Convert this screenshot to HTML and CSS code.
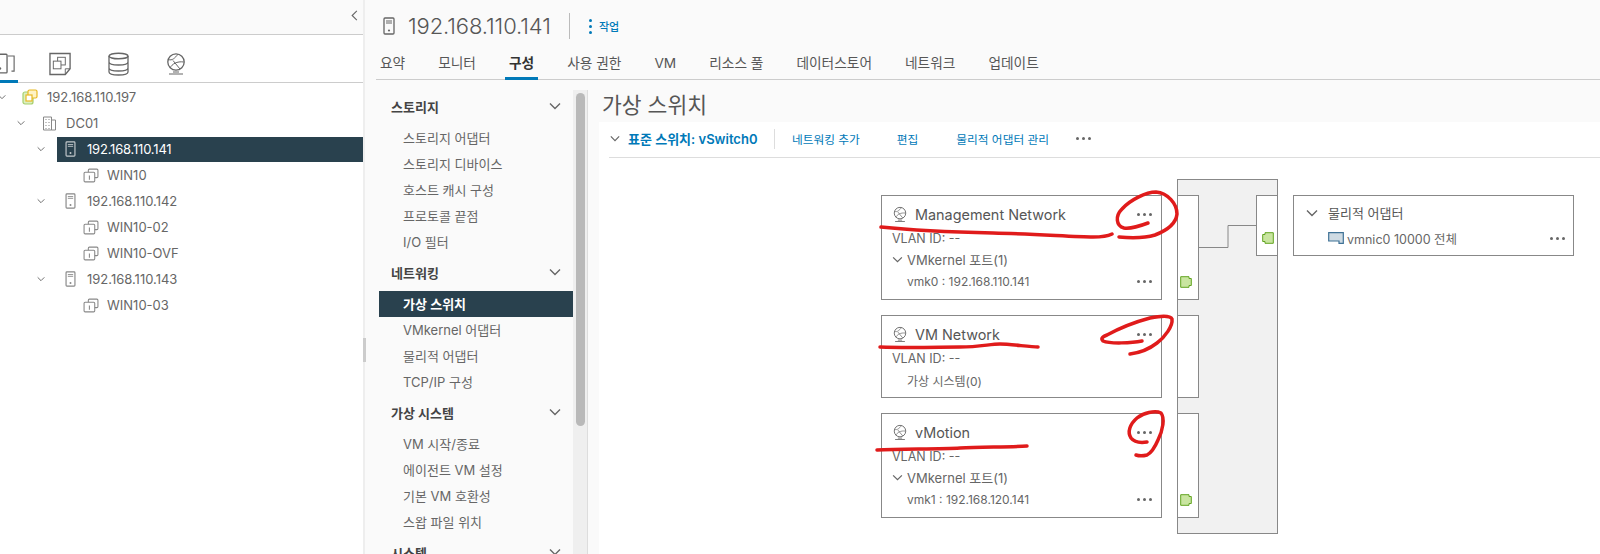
FILE: index.html
```html
<!DOCTYPE html>
<html lang="ko">
<head>
<meta charset="utf-8">
<title>vSphere</title>
<link rel="stylesheet" href="styles.css">
</head>
<body>
<svg class="defs" width="0" height="0">
  <defs>
    <symbol id="i-host" viewBox="0 0 12 18"><rect x="1" y="1" width="10" height="16" rx="1" fill="none" stroke="currentColor" stroke-width="1.3"/><path d="M3 4h6M3 6h6" stroke="currentColor" fill="none"/><circle cx="6" cy="13.5" r="1.1" fill="currentColor"/></symbol>
    <symbol id="i-vm" viewBox="0 0 15 14"><rect x="5" y="1" width="9" height="8" rx="1" fill="none" stroke="currentColor"/><rect x="1" y="4" width="10" height="9" rx="1" fill="#fff" stroke="currentColor"/><path d="M6 7v4" stroke="currentColor"/></symbol>
    <symbol id="i-net" viewBox="0 0 20 22"><circle cx="10" cy="9" r="8.2" fill="none" stroke="currentColor" stroke-width="1.3"/><path d="M2.5 6.5C6 8 9 5 12 1.2M4 15C6 11 11 8 17.8 9M7 7.500l7 8.500" fill="none" stroke="currentColor"/><path d="M7 19h6M3 21h14" stroke="currentColor" stroke-width="1.2"/></symbol>
    <symbol id="i-chev" viewBox="0 0 12 8"><path d="M1 1.5l5 5 5-5" fill="none" stroke="currentColor" stroke-width="1.4"/></symbol>
  </defs>
</svg>
<div class="page">
  <aside class="left">
    <div class="left-top"><svg class="collapse" viewBox="0 0 8 14"><path d="M7 1L1 7l6 6" fill="none" stroke="currentColor" stroke-width="1.4"/></svg></div>
    <div class="left-tabs">
      <div class="ltab ltab-active"><svg class="lt-icon" viewBox="0 0 26 24"><path d="M18 3h7v17h-3" fill="none" stroke="currentColor" stroke-width="1.3"/><rect x="1" y="1" width="16" height="21" rx="1" fill="none" stroke="currentColor" stroke-width="1.5"/><circle cx="9" cy="17" r="1.4" fill="currentColor"/></svg></div>
      <div class="ltab"><svg class="lt-icon" viewBox="0 0 24 24"><path d="M1 1h21v16l-5 6H1z" fill="none" stroke="currentColor" stroke-width="1.4"/><path d="M22 17h-5v6" fill="none" stroke="currentColor"/><rect x="9" y="5" width="8" height="8" fill="none" stroke="currentColor"/><rect x="4.5" y="9" width="8" height="8" fill="#fff" stroke="currentColor"/></svg></div>
      <div class="ltab"><svg class="lt-icon" viewBox="0 0 22 24"><ellipse cx="11" cy="4" rx="9.5" ry="2.8" fill="none" stroke="currentColor" stroke-width="1.4"/><path d="M1.5 4v16c0 2 4 3 9.500 3s9.500-1 9.500-3V4M1.500 10c0 2 4 3 9.500 3s9.500-1 9.500-3M1.500 16c0 2 4 3 9.500 3s9.500-1 9.500-3" fill="none" stroke="currentColor" stroke-width="1.3"/></svg></div>
      <div class="ltab"><svg class="lt-icon lt-net"><use href="#i-net"/></svg></div>
    </div>
    <ul class="tree">
      <li class="node lv0"><svg class="chev"><use href="#i-chev"/></svg><svg class="ic-vc" viewBox="0 0 16 16"><rect x="1" y="3" width="10" height="12" rx="2" fill="#dcefc0" stroke="#a6cf6c" stroke-width="1.2"/><rect x="6" y="1" width="9" height="8" rx="1.5" fill="#fff3c4" stroke="#e8b923" stroke-width="1.2"/><rect x="4" y="6" width="6" height="6" fill="#fff" stroke="#e8b923" stroke-width="1.2"/></svg><span>192.168.110.197</span></li>
      <li class="node lv1"><svg class="chev"><use href="#i-chev"/></svg><svg class="ic-dc" viewBox="0 0 14 15"><path d="M1 1h8v13H1zM9 4h4v10H9z" fill="none" stroke="currentColor"/><path d="M3 3h1v1H3zM6 3h1v1H6zM3 6h1v1H3zM6 6h1v1H6zM3 9h1v1H3zM6 9h1v1H6zM3 12h1v1H3zM6 12h1v1H6z" fill="currentColor"/></svg><span>DC01</span></li>
      <li class="node lv2 selected"><svg class="chev"><use href="#i-chev"/></svg><div class="sel-fill"><svg class="ic-host"><use href="#i-host"/></svg><span>192.168.110.141</span></div></li>
      <li class="node lv3"><svg class="ic-vm"><use href="#i-vm"/></svg><span>WIN10</span></li>
      <li class="node lv2"><svg class="chev"><use href="#i-chev"/></svg><div class="sel-none"><svg class="ic-host"><use href="#i-host"/></svg><span>192.168.110.142</span></div></li>
      <li class="node lv3"><svg class="ic-vm"><use href="#i-vm"/></svg><span>WIN10-02</span></li>
      <li class="node lv3"><svg class="ic-vm"><use href="#i-vm"/></svg><span>WIN10-OVF</span></li>
      <li class="node lv2"><svg class="chev"><use href="#i-chev"/></svg><div class="sel-none"><svg class="ic-host"><use href="#i-host"/></svg><span>192.168.110.143</span></div></li>
      <li class="node lv3"><svg class="ic-vm"><use href="#i-vm"/></svg><span>WIN10-03</span></li>
    </ul>
  </aside>
  <div class="gutter"><div class="gutter-handle"></div></div>
  <main class="right">
    <header class="head">
      <svg class="head-icon"><use href="#i-host"/></svg>
      <h1 class="head-title">192.168.110.141</h1>
      <div class="head-div"></div>
      <div class="head-act"><span class="kebab"><i></i><i></i><i></i></span><span>작업</span></div>
    </header>
    <nav class="tabs">
      <a>요약</a><a>모니터</a><a class="on">구성</a><a>사용 권한</a><a>VM</a><a>리소스 풀</a><a>데이터스토어</a><a>네트워크</a><a>업데이트</a>
    </nav>
    <div class="body">
      <div class="side">
        <div class="side-h">스토리지<svg class="chev2"><use href="#i-chev"/></svg></div>
        <div class="side-i">스토리지 어댑터</div>
        <div class="side-i">스토리지 디바이스</div>
        <div class="side-i">호스트 캐시 구성</div>
        <div class="side-i">프로토콜 끝점</div>
        <div class="side-i">I/O 필터</div>
        <div class="side-h">네트워킹<svg class="chev2"><use href="#i-chev"/></svg></div>
        <div class="side-i side-on">가상 스위치</div>
        <div class="side-i">VMkernel 어댑터</div>
        <div class="side-i">물리적 어댑터</div>
        <div class="side-i">TCP/IP 구성</div>
        <div class="side-h">가상 시스템<svg class="chev2"><use href="#i-chev"/></svg></div>
        <div class="side-i">VM 시작/종료</div>
        <div class="side-i">에이전트 VM 설정</div>
        <div class="side-i">기본 VM 호환성</div>
        <div class="side-i">스왑 파일 위치</div>
        <div class="side-h">시스템<svg class="chev2"><use href="#i-chev"/></svg></div>
      </div>
      <div class="sbar"><div class="sbar-thumb"></div></div>
      <section class="content">
        <h2 class="c-title">가상 스위치</h2>
        <div class="panel">
          <div class="toolbar">
            <svg class="tb-chev"><use href="#i-chev"/></svg>
            <b class="tb-name">표준 스위치: vSwitch0</b>
            <span class="tb-div"></span>
            <a class="tb-l tb-add">네트워킹 추가</a>
            <a class="tb-l tb-edit">편집</a>
            <a class="tb-l tb-mgr">물리적 어댑터 관리</a>
            <span class="dots tb-dots"><i></i><i></i><i></i></span>
          </div>
          <div class="diagram">
            <div class="pgs">
              <div class="card card-a">
                <div class="c-head"><svg class="c-net"><use href="#i-net"/></svg><span>Management Network</span><span class="dots"><i></i><i></i><i></i></span></div>
                <div class="c-line">VLAN ID: --</div>
                <div class="c-line c-exp"><svg class="c-chev"><use href="#i-chev"/></svg>VMkernel 포트(1)</div>
                <div class="c-line c-sub"><span>vmk0 : 192.168.110.141</span><span class="dots"><i></i><i></i><i></i></span></div>
              </div>
              <div class="card card-b">
                <div class="c-head"><svg class="c-net"><use href="#i-net"/></svg><span>VM Network</span><span class="dots"><i></i><i></i><i></i></span></div>
                <div class="c-line">VLAN ID: --</div>
                <div class="c-line c-sub">가상 시스템(0)</div>
              </div>
              <div class="card card-a">
                <div class="c-head"><svg class="c-net"><use href="#i-net"/></svg><span>vMotion</span><span class="dots"><i></i><i></i><i></i></span></div>
                <div class="c-line">VLAN ID: --</div>
                <div class="c-line c-exp"><svg class="c-chev"><use href="#i-chev"/></svg>VMkernel 포트(1)</div>
                <div class="c-line c-sub"><span>vmk1 : 192.168.120.141</span><span class="dots"><i></i><i></i><i></i></span></div>
              </div>
            </div>
            <div class="switch">
              <div class="sw-left">
                <div class="sw-port sw-a"><svg class="port" viewBox="0 0 12 12"><path d="M.7.7H9V2.500h2.300v7H9v1.800H.7z" fill="#c9e5a0" stroke="#62a420"/></svg></div>
                <div class="sw-port sw-b"></div>
                <div class="sw-port sw-a"><svg class="port" viewBox="0 0 12 12"><path d="M.7.7H9V2.500h2.300v7H9v1.800H.7z" fill="#c9e5a0" stroke="#62a420"/></svg></div>
              </div>
              <svg class="sw-wire" viewBox="0 0 58 24"><path d="M0 23.5h29v-22h29" fill="none" stroke="#888"/></svg>
              <div class="sw-up"><svg class="port" viewBox="0 0 12 12"><path d="M11.300.7H3V2.500H.7v7H3v1.800h8.300z" fill="#c9e5a0" stroke="#62a420"/></svg></div>
            </div>
            <div class="phys">
              <div class="p-head"><svg class="p-chev"><use href="#i-chev"/></svg><span>물리적 어댑터</span></div>
              <div class="p-row"><svg class="p-nic" viewBox="0 0 16 12"><path d="M.7.7h14.6v10.6H11V9H.7z" fill="#cfdbe3" stroke="#3f7296" stroke-width="1.2"/></svg><span>vmnic0 10000 전체</span><span class="dots"><i></i><i></i><i></i></span></div>
            </div>
          </div>
        </div>
      </section>
    </div>
  </main>
</div>
<svg class="ink" viewBox="0 0 1600 554" width="1600" height="554">
  <g fill="none" stroke="#e01b1b" stroke-width="3.5" stroke-linecap="round" stroke-linejoin="round">
    <path d="M881 227C910 230 950 232 993 233S1075 237 1093 237C1102 237 1108 236 1112 234"/>
    <path d="M1148 223C1140 226 1130 229 1124 228C1116 226 1115 216 1122 209C1130 200 1146 192 1156 192C1168 193 1177 204 1177 214C1176 224 1168 230 1155 235C1145 238 1130 238 1119 237"/>
    <path d="M880 347C910 348 940 347 960 347S990 344 1000 344S1030 347 1038 347"/>
    <path d="M1142 341C1132 343 1110 344 1103 341C1100 338 1104 336 1107 335C1118 329 1135 322 1150 318C1160 316 1170 315 1172 319C1173 326 1165 337 1157 343C1148 350 1138 353 1130 354"/>
    <path d="M877 450C900 449 940 449 960 448S1010 447 1027 446"/>
    <path d="M1147 442C1140 443 1134 442 1131 438C1127 432 1130 424 1137 418C1143 413 1155 410 1161 413C1165 418 1163 430 1158 440C1155 447 1151 453 1147 455C1143 456 1139 456 1136 455"/>
  </g>
</svg>
</body>
</html>
```
FILE: styles.css
```css
* { box-sizing: border-box; }
html, body { margin: 0; height: 554px; overflow: hidden; background: #fff; }
body { font-family: Inter, "Noto Sans CJK KR", sans-serif; font-size: 12px; color: #565656; }
.defs { position: absolute; }
.page { display: flex; width: 1600px; height: 554px; }
.ink { position: absolute; left: 0; top: 0; pointer-events: none; }

.left { width: 363px; flex: none; background: #fff; }
.left-top { height: 35px; background: #fafafa; border-bottom: 1px solid #ccc; display: flex; justify-content: flex-end; align-items: center; padding-right: 5px; }
.collapse { width: 7px; height: 11px; color: #666; margin-top: -3px; }
.left-tabs { height: 48px; border-bottom: 1px solid #ccc; display: flex; margin-left: -12px; }
.ltab { width: 30px; margin-right: 27.5px; display: flex; justify-content: center; padding-top: 17px; border-bottom: 3px solid transparent; height: 48px; }
.ltab-active { border-bottom-color: #0079b8; }
.lt-icon { width: 23px; height: 24px; color: #666; }
.lt-net { width: 20px; height: 22px; margin-top: 1px; }
.tree { list-style: none; margin: 1px 0 0; padding: 0; }
.node { height: 26px; display: flex; align-items: center; font-size: 13px; color: #666; }
.chev { width: 8px; height: 6px; color: #666; flex: none; }
.lv0 .chev { margin-left: -2px; margin-right: 16px; }
.lv1 .chev { margin-left: 17px; margin-right: 17px; }
.lv2 .chev { margin-left: 37px; }
.lv3 { padding-left: 83px; }
.ic-vc { width: 16px; height: 16px; margin-right: 9px; flex: none; }
.ic-dc { width: 15px; height: 15px; margin-right: 9px; color: #888; flex: none; }
.sel-fill, .sel-none { display: flex; align-items: center; flex: 1; height: 25px; margin-left: 12px; padding-left: 8px; }
.selected { color: #fff; }
.selected .sel-fill { background: #29414e; }
.selected span { letter-spacing: -0.2px; }
.ic-host { width: 11px; height: 16px; margin-right: 11px; color: #888; flex: none; }
.selected .ic-host { color: #c4c9cc; }
.ic-vm { width: 16px; height: 15px; margin-right: 8px; color: #888; flex: none; }

.gutter { width: 7px; flex: none; background: #fafafa; border-left: 2px solid #eee; position: relative; }
.gutter-handle { position: absolute; left: -2px; top: 338px; width: 3px; height: 24px; background: #ccc; }

.right { flex: 1; min-width: 0; background: #fafafa; }
.head { height: 52px; display: flex; align-items: center; padding-left: 13px; }
.head-icon { width: 12px; height: 18px; color: #666; margin-right: 13px; }
.head-title { margin: 0; font-size: 22px; font-weight: 300; color: #565656; width: 144px; white-space: nowrap; letter-spacing: -0.1px; }
.head-div { width: 1px; height: 26px; background: #bbb; margin-left: 17px; }
.head-act { display: flex; align-items: center; margin-left: 19px; color: #0079b8; font-size: 11px; font-weight: 500; }
.kebab { display: flex; flex-direction: column; gap: 3px; margin-right: 7px; }
.kebab i { width: 3px; height: 3px; border-radius: 50%; background: #0079b8; display: block; }
.tabs { height: 28px; margin-left: 6px; border-bottom: 1px solid #ccc; display: flex; }
.tabs a { display: block; height: 28px; padding: 0 4px; margin-right: 25px; font-size: 13.7px; line-height: 22px; color: #565656; white-space: nowrap; }
.tabs a.on { color: #333; font-weight: 600; border-bottom: 3px solid #0079b8; }

.body { display: flex; height: 474px; }
.side { width: 203px; padding: 9px 0 0 9px; flex: none; overflow: hidden; }
.side-h { height: 36px; display: flex; align-items: center; justify-content: space-between; padding: 0 12px 2px; font-weight: 700; color: #444; font-size: 13px; }
.side-i { height: 26px; line-height: 26px; padding-left: 24px; font-size: 13px; color: #666; white-space: nowrap; }
.side-on { background: #29414e; color: #fff; font-weight: 600; }
.chev2 { width: 12px; height: 8px; color: #666; }
.sbar { width: 15px; flex: none; margin-top: 10px; background: #efefef; border-right: 1px solid #ddd; }
.sbar-thumb { margin: 3px 2px 0 3px; height: 333px; background: #b9b9b9; border-radius: 5px; }
.content { flex: 1; min-width: 0; padding-left: 11px; }
.c-title { margin: 0; height: 42px; padding: 11px 0 0 3px; font-size: 21.5px; line-height: 28px; font-weight: 400; color: #565656; }
.panel { background: #fff; height: 432px; padding-left: 10px; }
.toolbar { height: 36px; border-bottom: 1px solid #ddd; display: flex; align-items: center; padding-bottom: 2px; }
.tb-chev { width: 10px; height: 7px; color: #666; margin-left: 1px; }
.tb-name { margin-left: 8px; color: #0079b8; font-size: 13px; font-weight: 600; white-space: nowrap; width: 134px; }
.tb-div { width: 1px; height: 20px; background: #ddd; margin-left: 12px; }
.tb-l { color: #0079b8; font-size: 11.7px; white-space: nowrap; }
.tb-add { margin-left: 17px; }
.tb-edit { margin-left: 37px; }
.tb-mgr { margin-left: 38px; }

.dots { display: inline-flex; gap: 3px; margin-left: auto; }
.dots i { width: 3px; height: 3px; background: #666; border-radius: 50%; display: block; }
.toolbar .tb-dots { margin-left: 27px; }

.diagram { display: flex; align-items: flex-start; padding: 37px 0 0 272px; }
.pgs { width: 281px; display: flex; flex-direction: column; gap: 15px; flex: none; }
.card { border: 1px solid #888; padding: 0 9px 0 10px; background: #fff; }
.card-a { height: 105px; }
.card-b { height: 83px; }
.c-head { height: 28px; display: flex; align-items: center; font-size: 14.4px; color: #565656; margin-top: 4px; }
.c-net { width: 14px; height: 17px; color: #666; margin-right: 8px; margin-left: 1px; }
.c-line { height: 21px; display: flex; align-items: center; font-size: 12.5px; color: #666; white-space: nowrap; }
.c-exp { font-size: 13px; }
.c-chev { width: 11px; height: 7px; color: #666; margin-right: 4px; }
.c-sub { height: 22px; padding-left: 15px; font-size: 12px; }

.switch { width: 101px; height: 355px; margin: -16px 0 0 15px; border: 1px solid #888; background: #f1f1f1; position: relative; flex: none; }
.sw-left { width: 21px; display: flex; flex-direction: column; gap: 15px; padding-top: 15px; }
.sw-port { background: #fff; border: 1px solid #888; border-left: 0; position: relative; }
.sw-a { height: 105px; }
.sw-b { height: 83px; }
.port { width: 12px; height: 12px; position: absolute; }
.sw-a .port { left: 2px; bottom: 11px; }
.sw-wire { position: absolute; left: 21px; top: 44px; width: 58px; height: 24px; }
.sw-up { position: absolute; right: 0; top: 15px; width: 21px; height: 61px; background: #fff; border: 1px solid #888; border-right: 0; }
.sw-up .port { left: 5px; top: 36px; }

.phys { width: 281px; height: 61px; margin-left: 15px; border: 1px solid #888; padding: 0 8px 0 12px; flex: none; }
.p-head { height: 33px; display: flex; align-items: center; font-size: 13px; color: #565656; }
.p-chev { width: 12px; height: 8px; color: #666; margin-right: 10px; }
.p-row { height: 18px; display: flex; align-items: center; padding-left: 22px; font-size: 12.5px; color: #666; }
.p-nic { width: 16px; height: 12px; margin-right: 3px; }
```
